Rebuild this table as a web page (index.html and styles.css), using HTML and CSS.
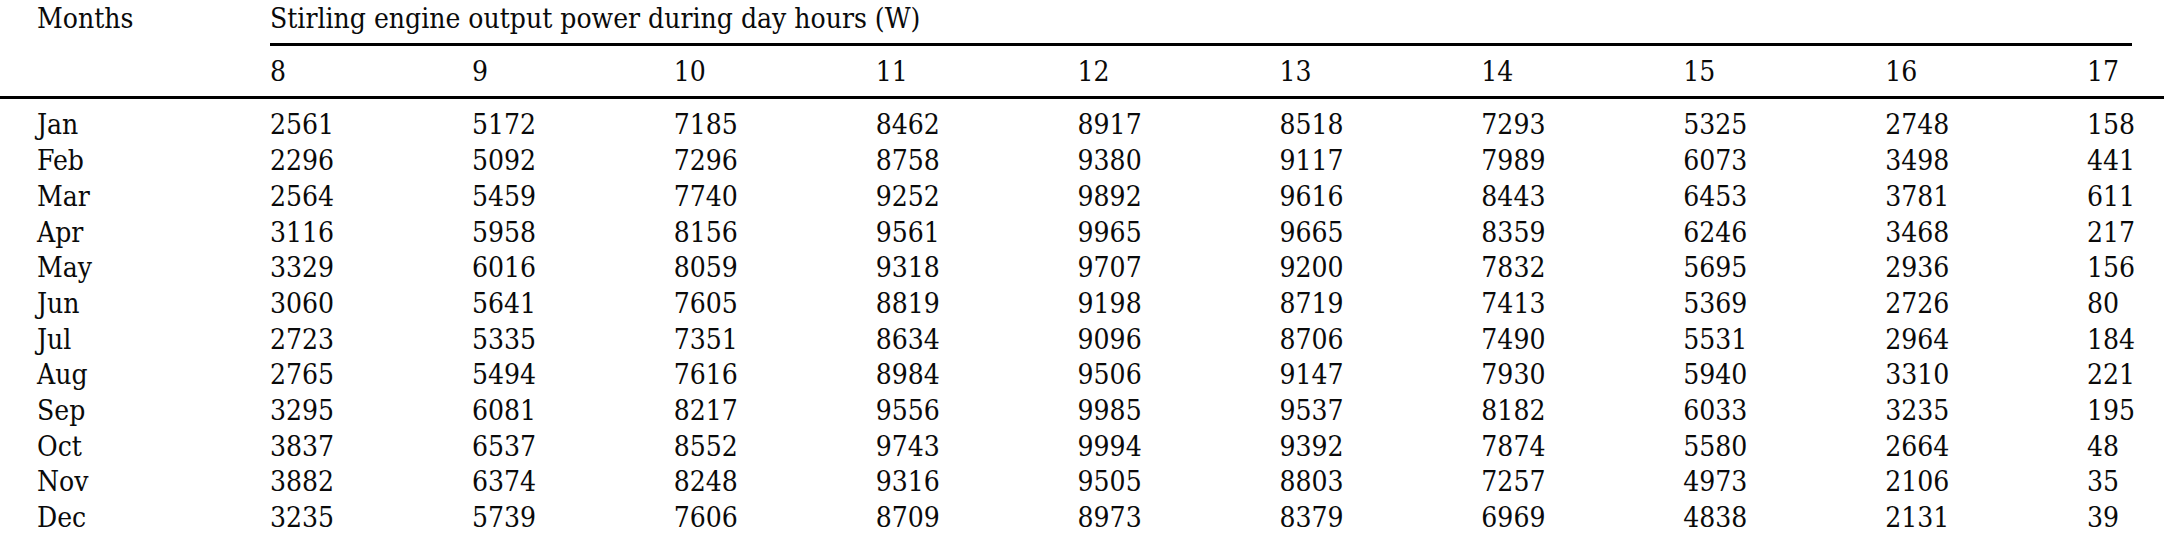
FILE: index.html
```html
<!DOCTYPE html>
<html lang="en">
<head>
<meta charset="utf-8">
<title>Stirling engine output power</title>
<link rel="stylesheet" href="styles.css">
</head>
<body>
<table class="power-table">
  <colgroup>
    <col class="c-month">
    <col class="c-hour"><col class="c-hour"><col class="c-hour"><col class="c-hour"><col class="c-hour">
    <col class="c-hour"><col class="c-hour"><col class="c-hour"><col class="c-hour">
    <col class="c-last">
  </colgroup>
  <thead>
    <tr>
      <th class="months" rowspan="2">Months</th>
      <th class="spanner" colspan="10"><div class="span-title">Stirling engine output power during day hours (W)</div></th>
    </tr>
    <tr class="hours">
      <th>8</th><th>9</th><th>10</th><th>11</th><th>12</th><th>13</th><th>14</th><th>15</th><th>16</th><th>17</th>
    </tr>
  </thead>
  <tbody>
    <tr><td class="m">Jan</td><td>2561</td><td>5172</td><td>7185</td><td>8462</td><td>8917</td><td>8518</td><td>7293</td><td>5325</td><td>2748</td><td>158</td></tr>
    <tr><td class="m">Feb</td><td>2296</td><td>5092</td><td>7296</td><td>8758</td><td>9380</td><td>9117</td><td>7989</td><td>6073</td><td>3498</td><td>441</td></tr>
    <tr><td class="m">Mar</td><td>2564</td><td>5459</td><td>7740</td><td>9252</td><td>9892</td><td>9616</td><td>8443</td><td>6453</td><td>3781</td><td>611</td></tr>
    <tr><td class="m">Apr</td><td>3116</td><td>5958</td><td>8156</td><td>9561</td><td>9965</td><td>9665</td><td>8359</td><td>6246</td><td>3468</td><td>217</td></tr>
    <tr><td class="m">May</td><td>3329</td><td>6016</td><td>8059</td><td>9318</td><td>9707</td><td>9200</td><td>7832</td><td>5695</td><td>2936</td><td>156</td></tr>
    <tr><td class="m">Jun</td><td>3060</td><td>5641</td><td>7605</td><td>8819</td><td>9198</td><td>8719</td><td>7413</td><td>5369</td><td>2726</td><td>80</td></tr>
    <tr><td class="m">Jul</td><td>2723</td><td>5335</td><td>7351</td><td>8634</td><td>9096</td><td>8706</td><td>7490</td><td>5531</td><td>2964</td><td>184</td></tr>
    <tr><td class="m">Aug</td><td>2765</td><td>5494</td><td>7616</td><td>8984</td><td>9506</td><td>9147</td><td>7930</td><td>5940</td><td>3310</td><td>221</td></tr>
    <tr><td class="m">Sep</td><td>3295</td><td>6081</td><td>8217</td><td>9556</td><td>9985</td><td>9537</td><td>8182</td><td>6033</td><td>3235</td><td>195</td></tr>
    <tr><td class="m">Oct</td><td>3837</td><td>6537</td><td>8552</td><td>9743</td><td>9994</td><td>9392</td><td>7874</td><td>5580</td><td>2664</td><td>48</td></tr>
    <tr><td class="m">Nov</td><td>3882</td><td>6374</td><td>8248</td><td>9316</td><td>9505</td><td>8803</td><td>7257</td><td>4973</td><td>2106</td><td>35</td></tr>
    <tr><td class="m">Dec</td><td>3235</td><td>5739</td><td>7606</td><td>8709</td><td>8973</td><td>8379</td><td>6969</td><td>4838</td><td>2131</td><td>39</td></tr>
  </tbody>
</table>
</body>
</html>
```

FILE: styles.css
```css
html, body {
  margin: 0;
  padding: 0;
  background: #ffffff;
}

body {
  font-family: "DejaVu Serif Condensed", "DejaVu Serif", serif;
  font-stretch: condensed;
  font-size: 28px;
  color: #0a0a0a;
}

.power-table {
  border-collapse: collapse;
  table-layout: fixed;
  width: 2164px;
}

.c-month { width: 270px; }
.c-hour { width: 201.9px; }
.c-last { width: 76.9px; }

.power-table th,
.power-table td {
  padding: 0;
  text-align: left;
  font-weight: normal;
  line-height: 36px;
  vertical-align: top;
  white-space: nowrap;
}

.power-table .months {
  padding-left: 37px;
  padding-top: 1.3px;
  border-bottom: 3px solid #000;
}

.power-table .spanner {
  padding-top: 1.3px;
}

.span-title {
  padding-bottom: 6px;
  margin-right: 32px;
  border-bottom: 3px solid #000;
}

.power-table .hours th {
  padding-top: 8px;
  padding-bottom: 6px;
  border-bottom: 3px solid #000;
}

.power-table tbody td {
  line-height: 35.7px;
}

.power-table tbody tr:first-child td {
  padding-top: 8.1px;
}

.power-table td.m {
  padding-left: 37px;
}
```
